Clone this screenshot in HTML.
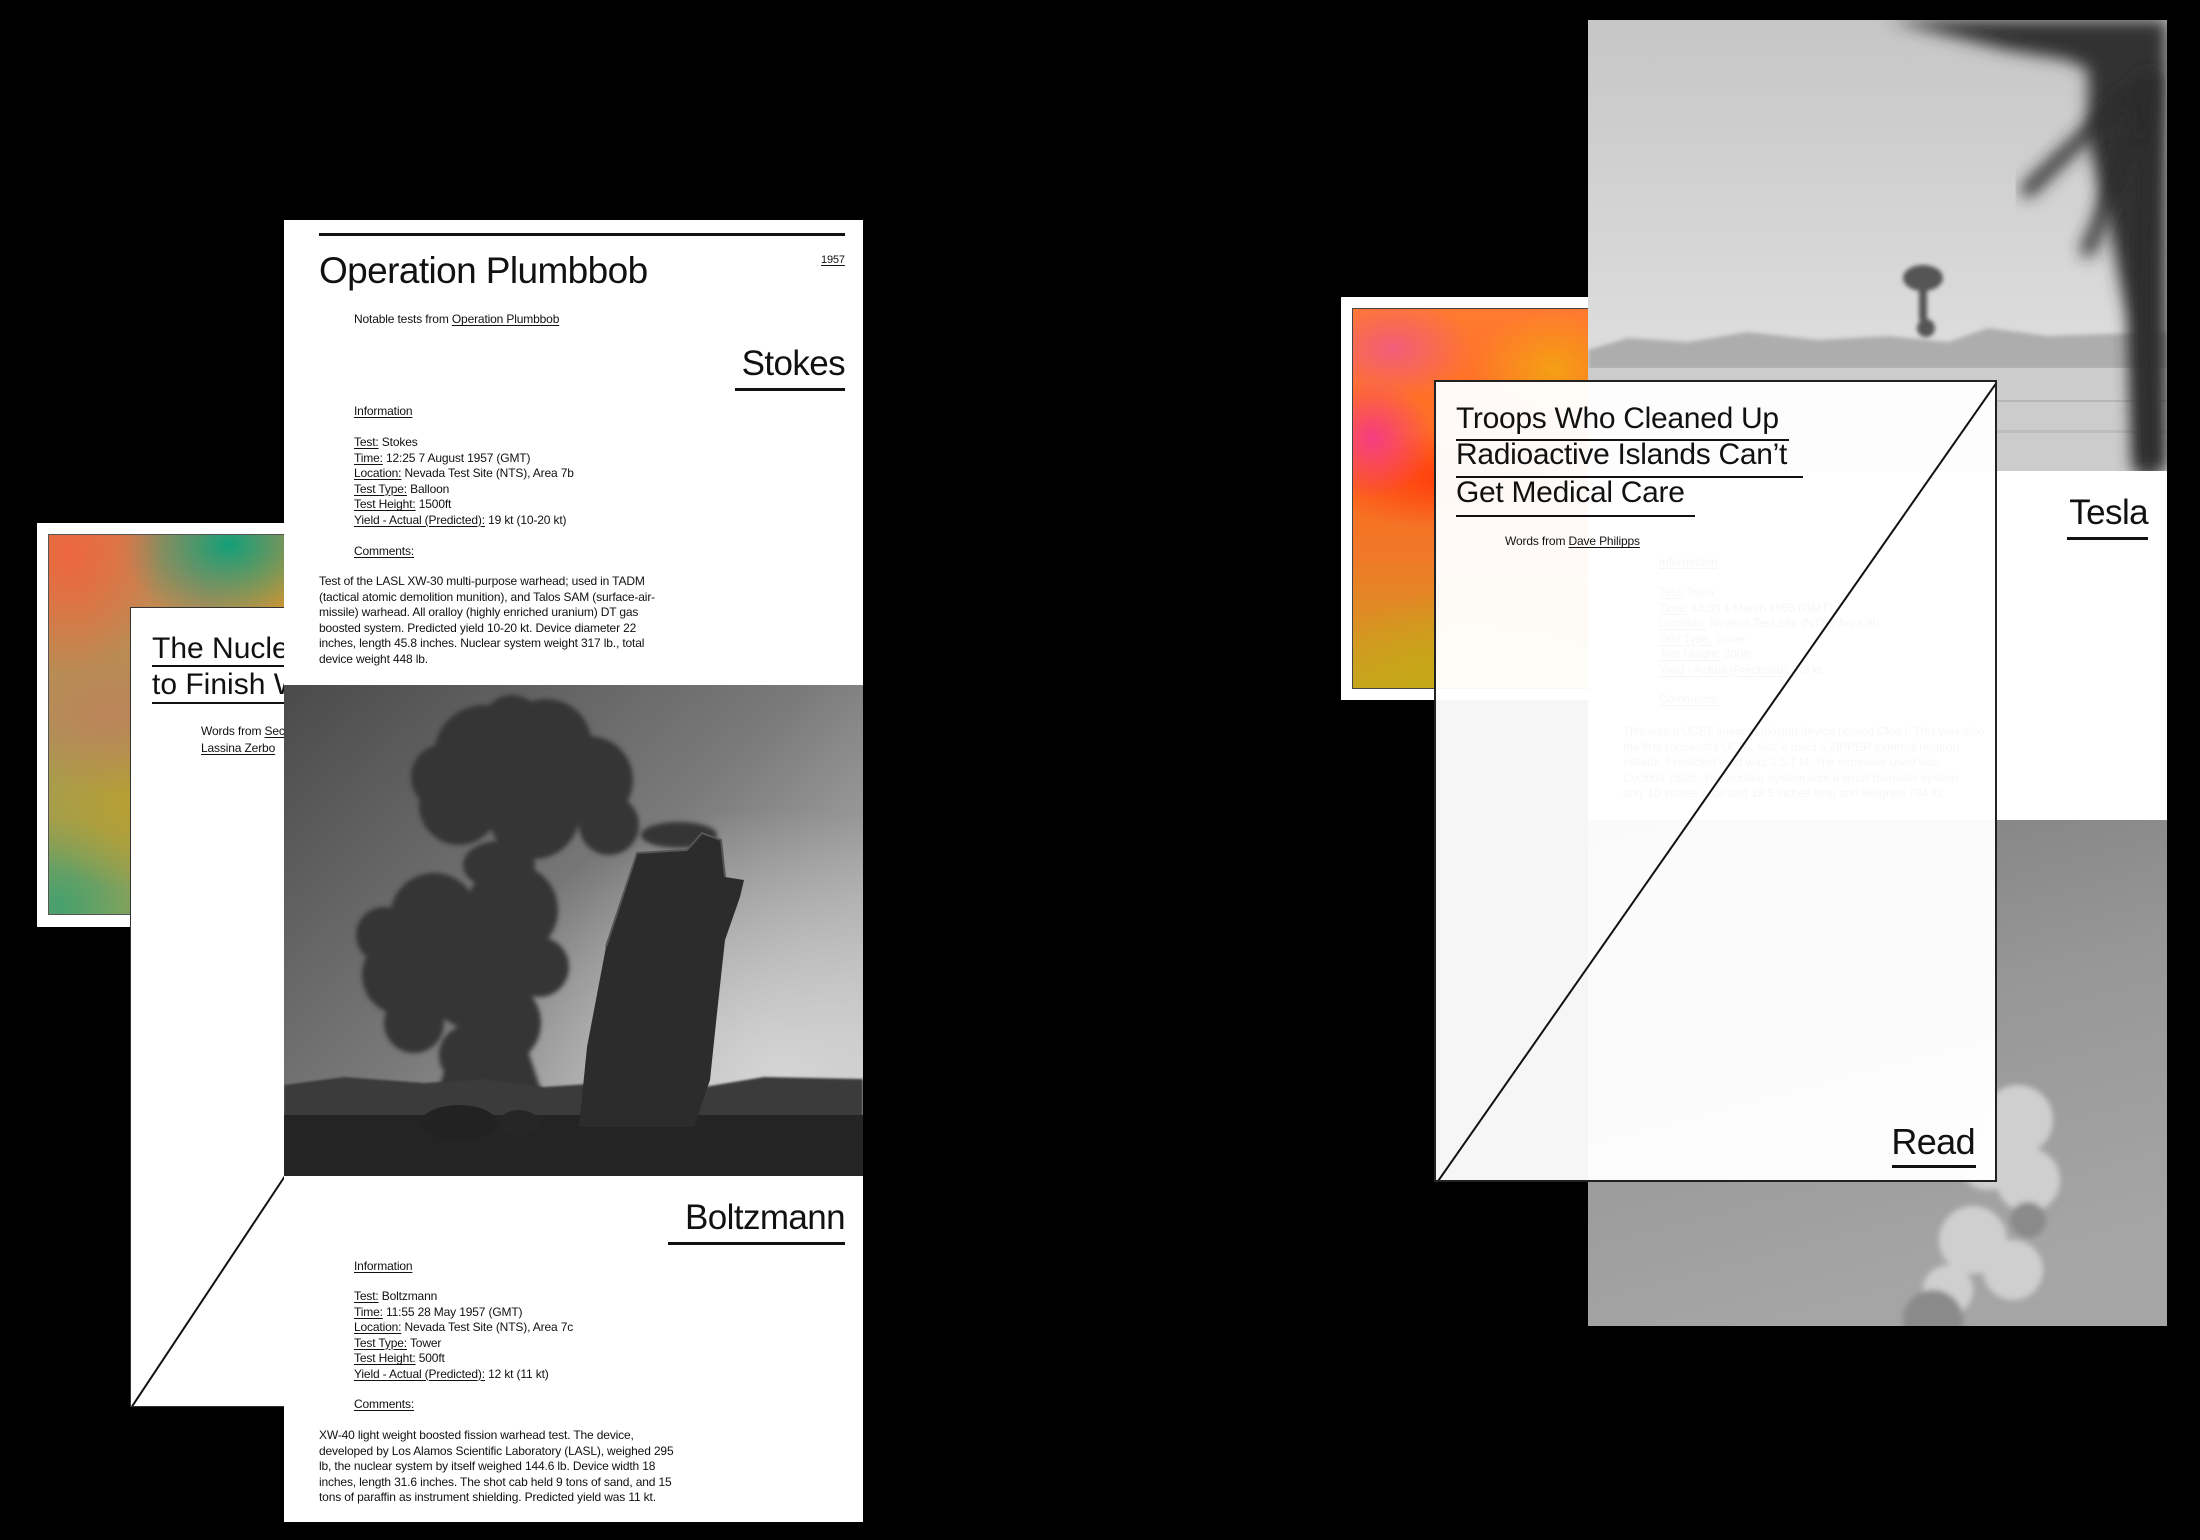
<!DOCTYPE html>
<html><head><meta charset="utf-8">
<style>
*{margin:0;padding:0;box-sizing:border-box}
html,body{width:2200px;height:1540px;background:#000;overflow:hidden}
body{position:relative;font-family:"Liberation Sans",Arial,sans-serif;color:#111}
.abs{position:absolute}
.s{position:absolute;font-size:12px;line-height:15.5px;white-space:nowrap;letter-spacing:-0.15px}
.s u{text-decoration:underline;text-underline-offset:2px;text-decoration-thickness:1px}
.h{position:absolute;line-height:1;white-space:nowrap;letter-spacing:-0.6px}
.rule{position:absolute;background:#111}
</style></head><body>

<!-- LEFT back gradient card -->
<div class="abs" style="left:37px;top:523px;width:260px;height:404px;background:#fff"></div>
<div class="abs" style="left:48px;top:534px;width:250px;height:381px;border:1px solid #555;
background:
radial-gradient(ellipse 90px 120px at 20px 20px, rgba(240,100,60,0.95), rgba(240,100,60,0) 100%),
radial-gradient(ellipse 110px 80px at 180px 10px, rgba(20,160,120,1), rgba(20,160,120,0) 100%),
radial-gradient(ellipse 90px 90px at 250px 60px, rgba(225,150,40,1), rgba(225,150,40,0) 100%),
radial-gradient(ellipse 120px 80px at 60px 180px, rgba(190,130,90,0.9), rgba(190,130,90,0) 100%),
radial-gradient(ellipse 160px 90px at 120px 270px, rgba(190,160,40,1), rgba(190,160,40,0) 100%),
radial-gradient(ellipse 90px 90px at 10px 370px, rgba(70,160,110,1), rgba(70,160,110,0) 100%),
linear-gradient(180deg,#cf8050,#a59a55 60%,#8fa358);"></div>

<!-- LEFT front card -->
<div class="abs" style="left:130px;top:607px;width:200px;height:800px;background:#fff;border:1px solid #333;overflow:hidden">
  <div class="h" style="left:21px;top:26px;font-size:30px;letter-spacing:0">The Nuclear Test Ban Treaty</div>
  <div class="rule" style="left:21px;top:57px;width:200px;height:2px"></div>
  <div class="h" style="left:21px;top:62px;font-size:30px;letter-spacing:0">to Finish What</div>
  <div class="rule" style="left:21px;top:94px;width:200px;height:2px"></div>
  <div class="s" style="left:70px;top:116px">Words from <u>Secretary</u></div>
  <div class="s" style="left:70px;top:133px"><u>Lassina Zerbo</u></div>
  <svg class="abs" style="left:0;top:0" width="200" height="800"><line x1="0" y1="800" x2="154" y2="568" stroke="#111" stroke-width="2"/></svg>
</div>

<!-- MAIN card -->
<div class="abs" style="left:284px;top:220px;width:579px;height:1302px;background:#fff"></div>
<div class="rule" style="left:319px;top:233px;width:526px;height:3px"></div>
<div class="h" style="left:319px;top:252px;font-size:37px">Operation Plumbbob</div>
<div class="s" style="left:821px;top:253px;font-size:11px"><u>1957</u></div>
<div class="s" style="left:354px;top:312px">Notable tests from <u>Operation Plumbbob</u></div>
<div class="h" style="right:1355px;top:346px;font-size:35px">Stokes</div>
<div class="rule" style="left:735px;top:388px;width:110px;height:3px"></div>
<div class="s" style="left:354px;top:404px"><u>Information</u></div>
<div class="s" style="left:354px;top:435px"><u>Test:</u> Stokes<br><u>Time:</u> 12:25 7 August 1957 (GMT)<br><u>Location:</u> Nevada Test Site (NTS), Area 7b<br><u>Test Type:</u> Balloon<br><u>Test Height:</u> 1500ft<br><u>Yield - Actual (Predicted):</u> 19 kt (10-20 kt)</div>
<div class="s" style="left:354px;top:544px"><u>Comments:</u></div>
<div class="s" style="left:319px;top:574px">Test of the LASL XW-30 multi-purpose warhead; used in TADM<br>(tactical atomic demolition munition), and Talos SAM (surface-air-<br>missile) warhead. All oralloy (highly enriched uranium) DT gas<br>boosted system. Predicted yield 10-20 kt. Device diameter 22<br>inches, length 45.8 inches. Nuclear system weight 317 lb., total<br>device weight 448 lb.</div>

<!-- main photo -->
<svg class="abs" style="left:284px;top:685px" width="579" height="491" viewBox="0 0 579 491">
<defs>
<linearGradient id="sky1" x1="0" y1="0" x2="1" y2="0.9"><stop offset="0" stop-color="#4a4a4a"/><stop offset="0.5" stop-color="#7a7a7a"/><stop offset="1" stop-color="#cacaca"/></linearGradient>
<radialGradient id="glow1" cx="0.85" cy="0.8" r="0.55"><stop offset="0" stop-color="#d8d8d8" stop-opacity="0.9"/><stop offset="1" stop-color="#d8d8d8" stop-opacity="0"/></radialGradient>
<filter id="bl3"><feGaussianBlur stdDeviation="2.5"/></filter>
<filter id="bl1"><feGaussianBlur stdDeviation="1"/></filter>
</defs>
<rect width="579" height="491" fill="url(#sky1)"/>
<rect width="579" height="491" fill="url(#glow1)"/>
<g fill="#363636" filter="url(#bl3)">
<circle cx="200" cy="70" r="50"/><circle cx="262" cy="60" r="46"/><circle cx="305" cy="95" r="44"/>
<circle cx="175" cy="120" r="40"/><circle cx="250" cy="128" r="46"/><circle cx="325" cy="140" r="30"/>
<circle cx="160" cy="92" r="33"/><circle cx="228" cy="40" r="30"/><ellipse cx="395" cy="150" rx="38" ry="13"/>
<ellipse cx="215" cy="180" rx="36" ry="24"/>
<circle cx="150" cy="232" r="44"/><circle cx="228" cy="225" r="46"/><circle cx="118" cy="290" r="40"/>
<circle cx="195" cy="290" r="56"/><circle cx="255" cy="282" r="30"/><circle cx="130" cy="338" r="30"/>
<circle cx="215" cy="338" r="42"/><circle cx="185" cy="370" r="30"/><circle cx="100" cy="250" r="28"/>
<polygon points="168,360 242,360 262,420 150,420"/>
</g>
<polygon points="0,400 60,392 140,398 200,394 260,402 320,398 420,402 480,392 579,394 579,440 0,440" fill="#3a3a3a" filter="url(#bl1)"/>
<rect y="430" width="579" height="61" fill="#242424"/>
<polygon points="295,442 303,362 322,262 353,168 403,165 418,148 437,155 441,192 460,195 456,212 441,255 433,328 426,395 410,442" fill="#2c2c2c"/>
<path d="M322,262 L353,168 403,165 418,148 437,155 441,192" fill="none" stroke="#555" stroke-width="2"/>
<ellipse cx="175" cy="438" rx="38" ry="18" fill="#222"/><ellipse cx="235" cy="438" rx="20" ry="13" fill="#262626"/>
</svg>

<div class="h" style="right:1355px;top:1200px;font-size:35px">Boltzmann</div>
<div class="rule" style="left:668px;top:1242px;width:177px;height:3px"></div>
<div class="s" style="left:354px;top:1259px"><u>Information</u></div>
<div class="s" style="left:354px;top:1289px"><u>Test:</u> Boltzmann<br><u>Time:</u> 11:55 28 May 1957 (GMT)<br><u>Location:</u> Nevada Test Site (NTS), Area 7c<br><u>Test Type:</u> Tower<br><u>Test Height:</u> 500ft<br><u>Yield - Actual (Predicted):</u> 12 kt (11 kt)</div>
<div class="s" style="left:354px;top:1397px"><u>Comments:</u></div>
<div class="s" style="left:319px;top:1428px">XW-40 light weight boosted fission warhead test. The device,<br>developed by Los Alamos Scientific Laboratory (LASL), weighed 295<br>lb, the nuclear system by itself weighed 144.6 lb. Device width 18<br>inches, length 31.6 inches. The shot cab held 9 tons of sand, and 15<br>tons of paraffin as instrument shielding. Predicted yield was 11 kt.</div>

<!-- RIGHT gradient card -->
<div class="abs" style="left:1341px;top:297px;width:260px;height:403px;background:#fff"></div>
<div class="abs" style="left:1352px;top:308px;width:250px;height:381px;border:1px solid #444;
background:
radial-gradient(ellipse 80px 50px at 40px 40px, rgba(240,90,130,0.9), rgba(240,90,130,0) 100%),
radial-gradient(ellipse 80px 60px at 200px 60px, rgba(245,160,20,1), rgba(245,160,20,0) 100%),
radial-gradient(ellipse 60px 60px at 20px 130px, rgba(245,60,130,1), rgba(245,60,130,0) 100%),
radial-gradient(ellipse 140px 50px at 100px 170px, rgba(255,60,10,1), rgba(255,60,10,0) 100%),
radial-gradient(ellipse 160px 90px at 120px 370px, rgba(195,170,20,1), rgba(195,170,20,0) 100%),
linear-gradient(180deg,#ff7a30 0%,#ff6a20 40%,#f07828 65%,#c8a420 100%);"></div>

<!-- TESLA card -->
<div class="abs" style="left:1588px;top:20px;width:579px;height:1306px;background:#fff"></div>
<svg class="abs" style="left:1588px;top:20px" width="579" height="451" viewBox="0 0 579 451">
<defs>
<linearGradient id="sky2" x1="0" y1="0" x2="0" y2="1"><stop offset="0" stop-color="#c6c6c6"/><stop offset="0.7" stop-color="#dcdcdc"/><stop offset="1" stop-color="#d2d2d2"/></linearGradient>
<filter id="bl4"><feGaussianBlur stdDeviation="8"/></filter>
<filter id="bl2"><feGaussianBlur stdDeviation="2"/></filter>
</defs>
<rect width="579" height="451" fill="url(#sky2)"/>
<polygon points="0,330 40,318 100,322 160,312 230,320 300,316 360,322 400,308 460,316 579,312 579,350 0,350" fill="#adadad" filter="url(#bl2)"/>
<rect y="348" width="579" height="103" fill="#cccccc"/>
<rect y="380" width="579" height="2" fill="#b8b8b8"/><rect y="410" width="579" height="3" fill="#bdbdbd"/>
<g fill="#555" filter="url(#bl2)"><ellipse cx="335" cy="258" rx="20" ry="13"/><rect x="331" y="265" width="8" height="35"/><circle cx="338" cy="308" r="9"/></g>
<g fill="#333" filter="url(#bl4)">
<polygon points="300,0 579,0 579,120 540,90 520,60 480,40 420,30"/>
<polygon points="500,40 579,40 579,451 545,451 540,300 520,200 500,120"/>
</g>
<g stroke="#2a2a2a" stroke-width="14" fill="none" stroke-linecap="round" filter="url(#bl4)">
<path d="M560,60 Q500,110 440,170"/><path d="M560,60 Q530,160 500,230"/><path d="M565,60 Q550,220 560,451"/>
</g>
</svg>
<div class="h" style="right:52px;top:495px;font-size:35px">Tesla</div>
<div class="rule" style="left:2067px;top:537px;width:81px;height:3px"></div>
<div class="s" style="left:1659px;top:555px"><u>Information</u></div>
<div class="s" style="left:1659px;top:585px"><u>Test:</u> Tesla<br><u>Time:</u> 13:30 1 March 1955 (GMT)<br><u>Location:</u> Nevada Test Site (NTS), Area 9b<br><u>Test Type:</u> Tower<br><u>Test Height:</u> 300ft<br><u>Yield - Actual (Predicted):</u> 7.3 kt</div>
<div class="s" style="left:1659px;top:692px"><u>Comments:</u></div>
<div class="s" style="left:1623px;top:724px">This was a UCRL linear implosion device named Cleo I. This was also<br>the first successful UCRL test; it used a ZIPPER external neutron<br>initiator. Predicted yield was 3.5-7 kt. The explosive used was<br>Cyclotol 75/25. The nuclear system was a small diameter system<br>only 10 inches wide and 19.5 inches long and weighed 784 lb.</div>
<svg class="abs" style="left:1588px;top:820px" width="579" height="506" viewBox="0 0 579 506">
<defs>
<linearGradient id="sky3" x1="0" y1="0" x2="0.3" y2="1"><stop offset="0" stop-color="#7d7d7d"/><stop offset="0.5" stop-color="#979797"/><stop offset="1" stop-color="#a5a5a5"/></linearGradient>
<filter id="bl5"><feGaussianBlur stdDeviation="3"/></filter>
</defs>
<rect width="579" height="506" fill="url(#sky3)"/>
<g filter="url(#bl5)">
<g fill="#cfcfcf"><circle cx="430" cy="300" r="35"/><circle cx="400" cy="340" r="30"/><circle cx="440" cy="360" r="32"/><circle cx="385" cy="420" r="34"/><circle cx="425" cy="450" r="30"/><circle cx="360" cy="470" r="25"/></g>
<g fill="#8a8a8a"><circle cx="440" cy="400" r="18"/><circle cx="345" cy="500" r="30"/></g>
</g>
</svg>

<!-- TROOPS front card -->
<div class="abs" style="left:1434px;top:380px;width:563px;height:802px;background:rgba(255,255,255,0.965);border:2px solid #222;overflow:hidden">
  <div class="h" style="left:20px;top:22px;font-size:30px;letter-spacing:-0.3px">Troops Who Cleaned Up</div>
  <div class="rule" style="left:20px;top:57px;width:333px;height:2px"></div>
  <div class="h" style="left:20px;top:58px;font-size:30px;letter-spacing:-0.3px">Radioactive Islands Can’t</div>
  <div class="rule" style="left:20px;top:94px;width:347px;height:2px"></div>
  <div class="h" style="left:20px;top:96px;font-size:30px;letter-spacing:-0.3px">Get Medical Care</div>
  <div class="rule" style="left:20px;top:133px;width:239px;height:2px"></div>
  <div class="s" style="left:69px;top:152px">Words from <u>Dave Philipps</u></div>
  <div class="h" style="right:20px;top:742px;font-size:36px">Read</div>
  <div class="rule" style="left:456px;top:783px;width:84px;height:3px"></div>
  <svg class="abs" style="left:0;top:0" width="563" height="802"><line x1="0" y1="802" x2="561" y2="0" stroke="#111" stroke-width="2"/></svg>
</div>

</body></html>
